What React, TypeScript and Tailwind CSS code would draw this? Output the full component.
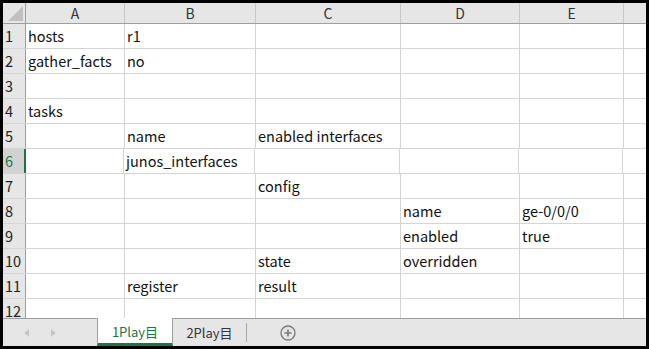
const cols = [
  { key: "A", w: "w-[99px]" },
  { key: "B", w: "w-[131px]" },
  { key: "C", w: "w-[145px]" },
  { key: "D", w: "w-[119px]" },
  { key: "E", w: "w-[104px]" },
];

const rows: string[][] = [
  ["hosts", "r1", "", "", ""],
  ["gather_facts", "no", "", "", ""],
  ["", "", "", "", ""],
  ["tasks", "", "", "", ""],
  ["", "name", "enabled interfaces", "", ""],
  ["", "junos_interfaces", "", "", ""],
  ["", "", "config", "", ""],
  ["", "", "", "name", "ge-0/0/0"],
  ["", "", "", "enabled", "true"],
  ["", "", "state", "overridden", ""],
  ["", "register", "result", "", ""],
  ["", "", "", "", ""],
];

const font = { fontFamily: '"Noto Sans CJK JP", "Noto Sans", sans-serif' };

export default function App() {
  return (
    <div className="w-[649px] h-[349px] bg-black p-[3px]" style={font}>
      <div className="flex h-full w-full flex-col bg-white">
        <div className="flex-1 overflow-hidden">
          {/* column headers */}
          <div className="flex h-[21px] border-b border-[#9e9e9e] bg-[#e6e6e6] text-[14px] text-[#333]">
            <div className="relative w-[23px] shrink-0 border-r border-[#9e9e9e]">
              <svg className="absolute right-[2px] bottom-[2px]" width="15" height="15" viewBox="0 0 15 15">
                <path d="M15 0 L15 15 L0 15 Z" fill="#c0c0c0" />
              </svg>
            </div>
            {cols.map((c) => (
              <div
                key={c.key}
                className={`${c.w} shrink-0 border-r border-[#c8c8c8] flex items-center justify-center leading-none`}
              >
                {c.key}
              </div>
            ))}
            <div className="flex-1" />
          </div>
          {rows.map((r, i) => {
            const sel = i === 5;
            return (
              <div key={i} className="flex h-[25px] border-b border-[#d4d4d4] text-[14.5px]">
                <div
                  className={
                    sel
                      ? "w-[23px] shrink-0 border-r-2 border-[#217346] bg-[#d2d2d2] pl-[2px] text-[#217346] flex items-center"
                      : "w-[23px] shrink-0 border-r border-[#9e9e9e] bg-[#e6e6e6] pl-[2px] text-[#222] flex items-center"
                  }
                >
                  {i + 1}
                </div>
                {cols.map((c, j) => (
                  <div
                    key={c.key}
                    className={`${c.w} shrink-0 border-r border-[#d4d4d4] pl-[2px] flex items-center whitespace-nowrap text-[#111] ${sel && j === 0 ? "-ml-px" : ""}`}
                  >
                    {r[j]}
                  </div>
                ))}
                <div className="flex-1" />
              </div>
            );
          })}
        </div>
        {/* sheet tabs */}
        <div className="flex h-[28px] shrink-0 items-stretch border-t border-[#9e9e9e] bg-[#e6e6e6] text-[13px]">
          <div className="flex w-[94px] items-center gap-[22px] pl-[21px]">
            <svg width="5" height="8" viewBox="0 0 5 8">
              <path d="M5 0 L0 4 L5 8 Z" fill="#c6c6c6" />
            </svg>
            <svg width="5" height="8" viewBox="0 0 5 8">
              <path d="M0 0 L5 4 L0 8 Z" fill="#c6c6c6" />
            </svg>
          </div>
          <div className="-mt-px flex w-[76px] items-center justify-center border-x border-[#9e9e9e] border-b-[3px] border-b-[#217346] bg-white pt-[2px] text-[#217346]">
            1Play目
          </div>
          <div className="flex w-[73px] items-center justify-center text-[#333]">
            2Play目
          </div>
          <div className="my-[4px] w-px bg-[#a8a8a8]" />
          <div className="flex w-[82px] items-center justify-center">
            <svg width="16" height="16" viewBox="0 0 16 16">
              <circle cx="8" cy="8" r="7" fill="none" stroke="#7a7a7a" strokeWidth="1.3" />
              <path d="M8 4.5 V11.5 M4.5 8 H11.5" stroke="#7a7a7a" strokeWidth="1.6" />
            </svg>
          </div>
        </div>
      </div>
    </div>
  );
}
